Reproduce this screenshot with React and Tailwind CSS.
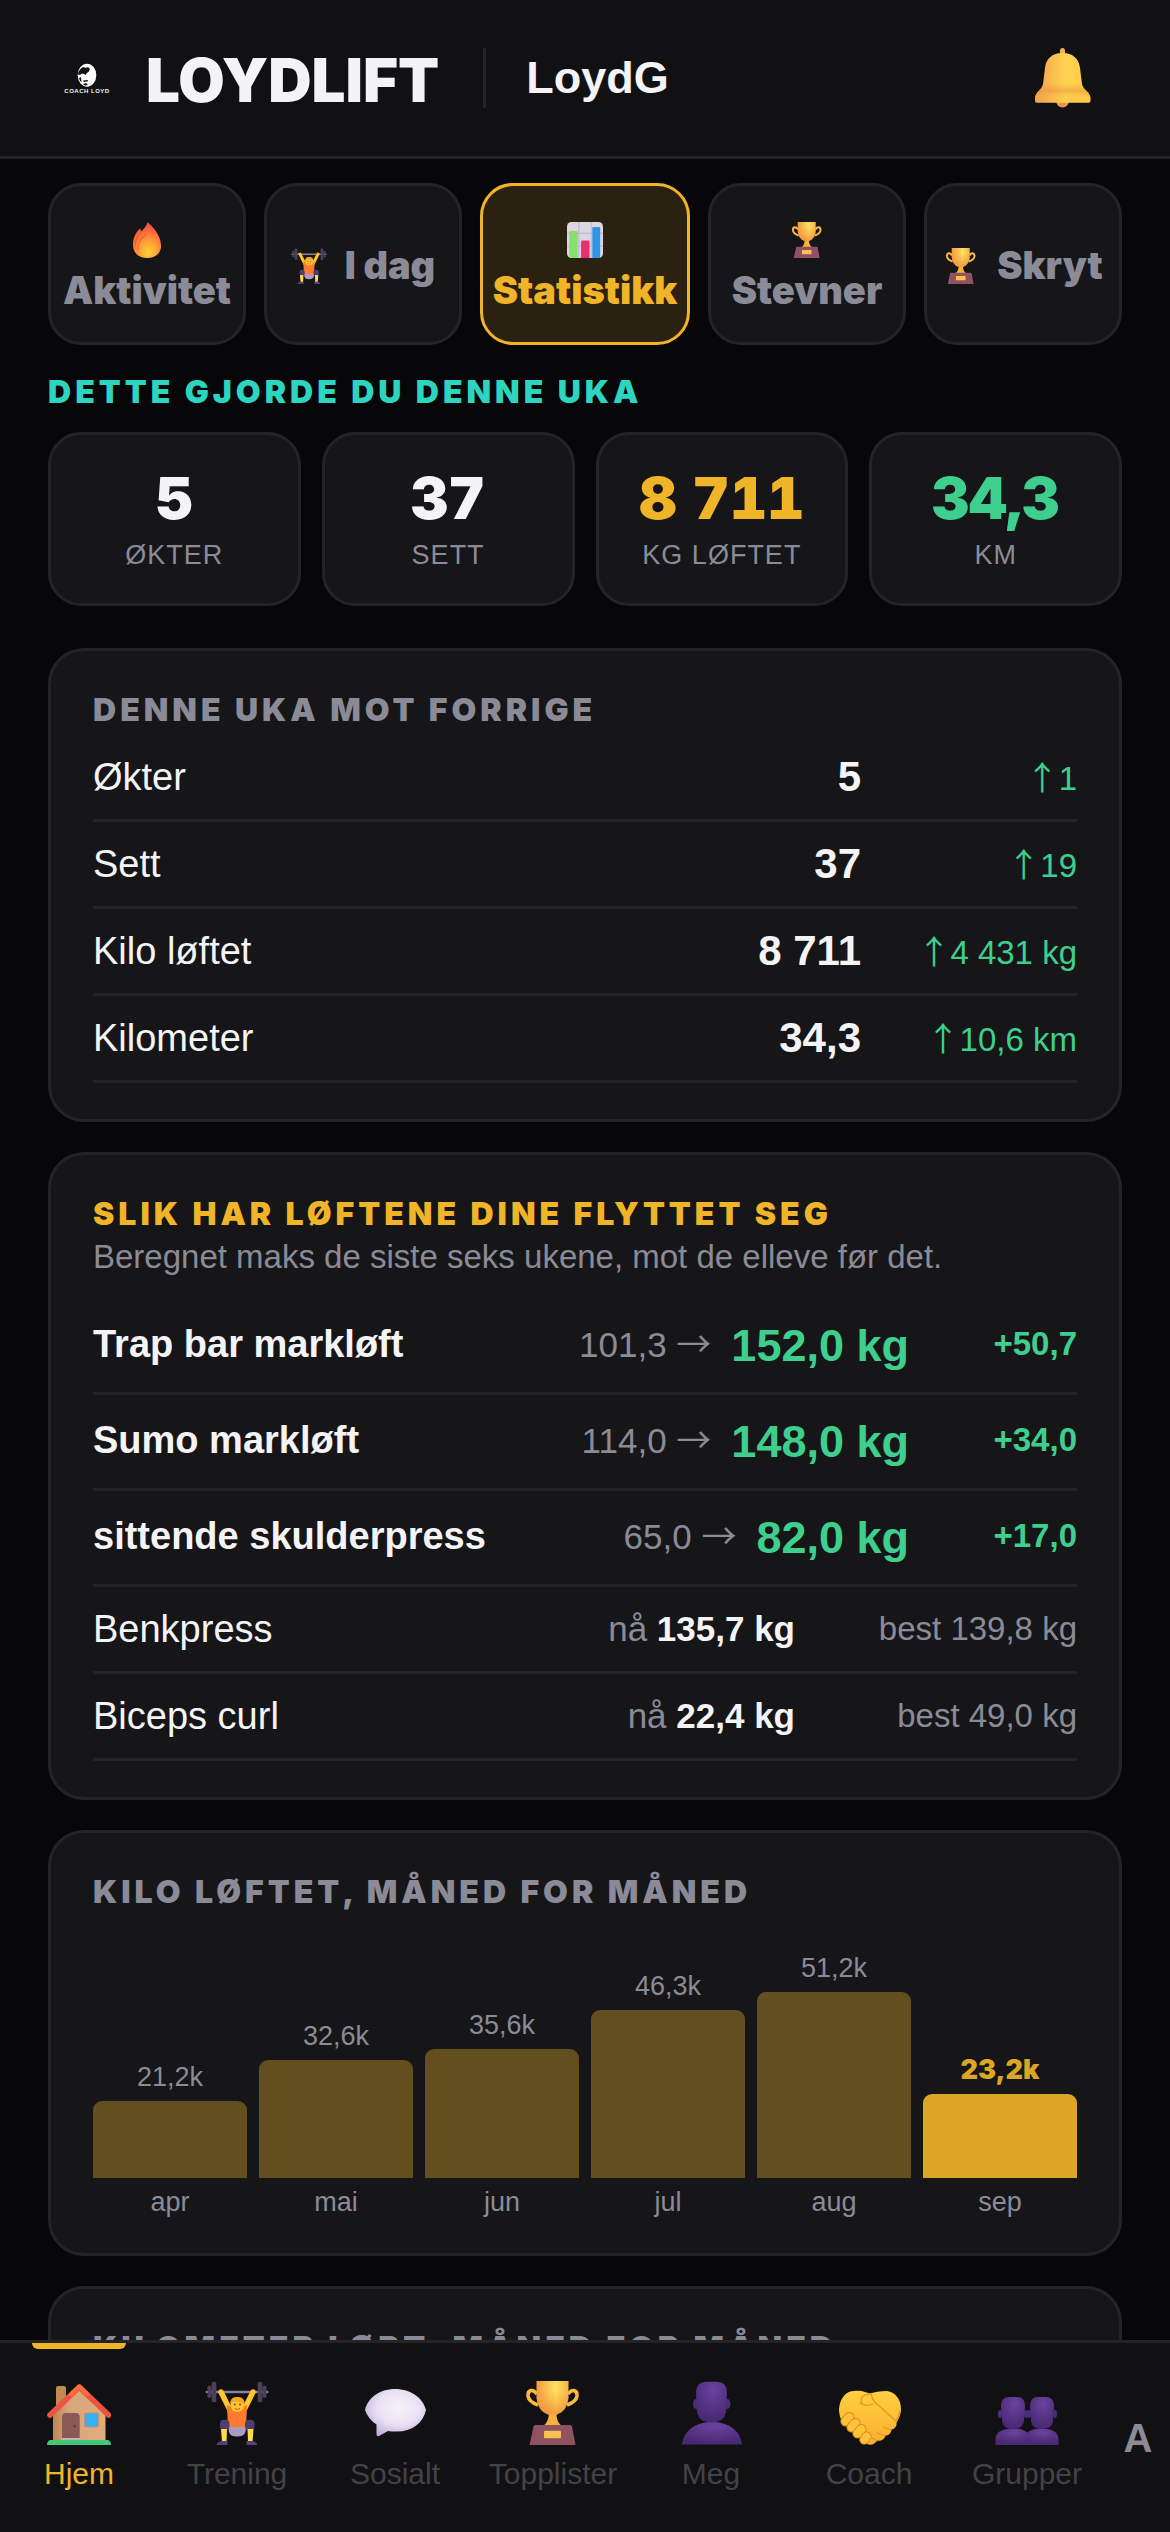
const tabs = [
  { label: 'Aktivitet', icon: FlameIcon },
  { label: 'I dag', icon: LifterIcon },
  { label: 'Statistikk', icon: ChartIcon, active: true },
  { label: 'Stevner', icon: TrophyIcon },
  { label: 'Skryt', icon: TrophyIcon },
];

const weekStats = [
  { value: '5', label: 'ØKTER', color: 'text-[#f4f4f6]' },
  { value: '37', label: 'SETT', color: 'text-[#f4f4f6]' },
  { value: '8 711', label: 'KG LØFTET', color: 'text-[#f0b429]' },
  { value: '34,3', label: 'KM', color: 'text-[#3ecf8e]' },
];

const comparison = [
  { label: 'Økter', value: '5', delta: '1' },
  { label: 'Sett', value: '37', delta: '19' },
  { label: 'Kilo løftet', value: '8 711', delta: '4 431 kg' },
  { label: 'Kilometer', value: '34,3', delta: '10,6 km' },
];

const improved = [
  { name: 'Trap bar markløft', from: '101,3', to: '152,0 kg', delta: '+50,7' },
  { name: 'Sumo markløft', from: '114,0', to: '148,0 kg', delta: '+34,0' },
  { name: 'sittende skulderpress', from: '65,0', to: '82,0 kg', delta: '+17,0' },
];

const steady = [
  { name: 'Benkpress', now: '135,7 kg', best: '139,8 kg' },
  { name: 'Biceps curl', now: '22,4 kg', best: '49,0 kg' },
];

const months = [
  { name: 'apr', value: 21.2 },
  { name: 'mai', value: 32.6 },
  { name: 'jun', value: 35.6 },
  { name: 'jul', value: 46.3 },
  { name: 'aug', value: 51.2 },
  { name: 'sep', value: 23.2, current: true },
];

const navItems = [
  { label: 'Hjem', icon: HouseIcon, active: true },
  { label: 'Trening', icon: LifterIcon },
  { label: 'Sosialt', icon: BubbleIcon },
  { label: 'Topplister', icon: TrophyIcon },
  { label: 'Meg', icon: PersonIcon },
  { label: 'Coach', icon: HandshakeIcon },
  { label: 'Grupper', icon: PeopleIcon },
];

const MAX_BAR_HEIGHT = 186;

function Logo() {
  return (
    <svg viewBox="0 0 54 54" className="w-[54px] h-[54px] shrink-0" role="img" aria-label="Coach Loyd">
      <ellipse cx="27" cy="24.200" rx="9.300" ry="11.500" fill="#fff" />
      <path
        d="M21 17.500C22.500 15.500 25 16 25.500 17C27.500 15.500 30.500 16.500 29.500 19.500C29 21.500 27 21 26.500 22.500L25.500 24L24 23L22 22.500L20 24L18 23.500L18.500 20.500Z"
        fill="#111113"
      />
      <path d="M19 27L21 26L21.500 31L20 30Z M23 29.500L28 29L27.500 30.500L24 31Z M23 33L26 32L28 34L25 34.500Z" fill="#111113" />
      <text x="27" y="42" textAnchor="middle" fontSize="6" fontWeight="700" letterSpacing="0.5" fill="#f4f4f6">
        COACH LOYD
      </text>
    </svg>
  );
}

function BellIcon({ className }) {
  return (
    <svg viewBox="0 0 60 60" className={className} aria-hidden="true">
      <defs>
        <linearGradient id="bell" x1="0" y1="0" x2="1" y2="0">
          <stop offset="0" stopColor="#f4a04c" />
          <stop offset="0.55" stopColor="#ffd352" />
          <stop offset="1" stopColor="#ffca45" />
        </linearGradient>
        <linearGradient id="bellShade" x1="0" y1="0" x2="0" y2="1">
          <stop offset="0.6" stopColor="#f0a040" stopOpacity="0" />
          <stop offset="0.76" stopColor="#e89640" stopOpacity="0.55" />
          <stop offset="0.88" stopColor="#f0a040" stopOpacity="0.1" />
        </linearGradient>
      </defs>
      <circle cx="29.500" cy="53" r="6.500" fill="#f3935a" />
      <rect x="27" y="0" width="5" height="9" rx="2.500" fill="#f6b04a" />
      <path
        d="M29.500 5C40 5 46 11 47 20L49 36C50 42 57.500 44 57.500 50V53Q57.500 54.700 55.500 54.700H4Q2 54.700 2 53V50C2 44 9 42 10 36L12 20C13 11 19 5 29.500 5Z"
        fill="url(#bell)"
      />
      <path
        d="M29.500 5C40 5 46 11 47 20L49 36C50 42 57.500 44 57.500 50V53Q57.500 54.700 55.500 54.700H4Q2 54.700 2 53V50C2 44 9 42 10 36L12 20C13 11 19 5 29.500 5Z"
        fill="url(#bellShade)"
      />
    </svg>
  );
}

function FlameIcon({ className }) {
  return (
    <svg viewBox="0 0 64 64" className={className} aria-hidden="true">
      <defs>
        <radialGradient id="flame" cx="0.55" cy="0.85" r="0.85">
          <stop offset="0" stopColor="#ffd23a" />
          <stop offset="0.35" stopColor="#ffa436" />
          <stop offset="0.7" stopColor="#fb6b3a" />
          <stop offset="1" stopColor="#ee4450" />
        </radialGradient>
      </defs>
      <path
        d="M33 0C42 8 57 24 57 42C57 56 46 64 33 64C17 64 7 55 7 40C7 28 13 17 19 12C21 13 21 15 22 17C26 12 31 8 33 0Z"
        fill="url(#flame)"
      />
      <path d="M22 17C16 24 11 32 11 43M30 22C21 29 15 38 16 50" fill="none" stroke="#e8562f" strokeWidth="2" opacity="0.7" />
    </svg>
  );
}

function LifterIcon({ className }) {
  return (
    <svg viewBox="0 0 64 64" className={className} aria-hidden="true">
      <rect x="0.500" y="9.700" width="63" height="2.600" rx="1.300" fill="#8b8395" />
      <g fill="#4b3f5c">
        <rect x="2.500" y="4.700" width="4" height="12" rx="1.500" />
        <rect x="6.700" y="0.700" width="4.600" height="20.600" rx="1.500" />
        <rect x="52.700" y="0.700" width="4.600" height="20.600" rx="1.500" />
        <rect x="57.500" y="4.700" width="4" height="12" rx="1.500" />
      </g>
      <path d="M16 11L25 29M48 11L39 29" stroke="#ffc42e" strokeWidth="5.400" strokeLinecap="round" />
      <path d="M22 24Q32 29 42 24L41 48H23Z" fill="#ff7a2c" />
      <path d="M23.500 46H41L40.500 51Q39 55.500 32 55.500Q25 55.500 24 51Z" fill="#a99bc4" />
      <rect x="15" y="38.700" width="9.500" height="10.500" rx="4" fill="#4f3c70" />
      <rect x="40" y="38.700" width="9.500" height="10.500" rx="4" fill="#4f3c70" />
      <path d="M16 48H22L21.500 61H17Z M42.500 48H48.500L47.500 61H43Z" fill="#ffdc45" />
      <path d="M11.500 64Q12 61 16.500 60H22.500V64Z M41.500 64V60H47.500Q52 61 52.500 64Z" fill="#54407a" />
      <circle cx="32.300" cy="24" r="7" fill="#ffc62c" />
      <path d="M25 22Q26 15.500 32 16Q39 15 40 23Q36 20.500 32 20.500Q28 20.500 25 22Z" fill="#f6a91c" />
      <circle cx="29.800" cy="23.600" r="1" fill="#54407a" />
      <circle cx="35" cy="23.600" r="1" fill="#54407a" />
      <path d="M30 27.500Q32.400 29.500 35 27.500" fill="none" stroke="#b3541c" strokeWidth="1" />
    </svg>
  );
}

function ChartIcon({ className }) {
  return (
    <svg viewBox="0 0 64 64" className={className} aria-hidden="true">
      <rect width="64" height="64" rx="8" fill="#dcd5e2" />
      <path d="M0 20H64M0 43H64M21 0V64M43 0V64" stroke="#b9b0c2" strokeWidth="1.500" />
      <path d="M4 64V18Q4 16 6 16H17Q19 16 19 18V64Z" fill="#86e06d" />
      <path d="M25 64V35Q25 33 27 33H38Q40 33 40 35V64Z" fill="#e6306f" />
      <path d="M45 64V11Q45 9 47 9H57Q59 9 59 11V64Z" fill="#3194e6" />
    </svg>
  );
}

function TrophyIcon({ className }) {
  return (
    <svg viewBox="0 0 64 64" className={className} aria-hidden="true">
      <defs>
        <linearGradient id="cup" x1="0" y1="0" x2="1" y2="0">
          <stop offset="0" stopColor="#f49a3f" />
          <stop offset="0.6" stopColor="#ffe060" />
          <stop offset="1" stopColor="#f7b443" />
        </linearGradient>
        <linearGradient id="cupShade" x1="0" y1="0" x2="0" y2="1">
          <stop offset="0.3" stopColor="#ee9440" stopOpacity="0" />
          <stop offset="1" stopColor="#ee8a3c" stopOpacity="0.8" />
        </linearGradient>
      </defs>
      <path
        d="M16 13Q13 9 10 9.500Q6.500 10.500 7 15Q8 21 17 24M47 13Q50 9 53 9.500Q56.500 10.500 56 15Q55 21 46 24"
        fill="none"
        stroke="#fcb93e"
        strokeWidth="3.600"
      />
      <path d="M28 31H35.500Q35 41 41 45H22Q28 41 28 31Z" fill="#f6b13f" />
      <path d="M15.500 0H47.500V17Q46 30 36 33.500H27Q17 30 15.500 17Z" fill="url(#cup)" />
      <path d="M15.500 0H47.500V17Q46 30 36 33.500H27Q17 30 15.500 17Z" fill="url(#cupShade)" />
      <path d="M14.500 44H49Q50.500 44 51 45.500L54.500 64H8.500L12.500 45.500Q13 44 14.500 44Z" fill="#8e5263" />
      <rect x="23" y="49.700" width="17" height="7.600" rx="1" fill="#fcc052" />
    </svg>
  );
}

function HouseIcon({ className }) {
  return (
    <svg viewBox="0 0 64 64" className={className} aria-hidden="true">
      <defs>
        <linearGradient id="wall" x1="0" y1="0" x2="1" y2="0">
          <stop offset="0" stopColor="#bd8553" />
          <stop offset="0.3" stopColor="#d9a57d" />
          <stop offset="1" stopColor="#e0ad7e" />
        </linearGradient>
      </defs>
      <path d="M9 7Q9 5 11 5H17Q19 5 19 7V30H9Z" fill="#c28a52" />
      <path d="M32.300 8L58.500 34V60H6V34Z" fill="url(#wall)" />
      <path d="M3 34L32.300 6L61.500 34" fill="none" stroke="#ee5340" strokeWidth="5.600" strokeLinecap="round" strokeLinejoin="round" />
      <path d="M24 13.500L32.300 5.500L40 13" fill="none" stroke="#f96f35" strokeWidth="4" strokeLinecap="round" strokeLinejoin="round" />
      <path d="M15 58V36Q15 32 19 32H29Q32.700 32 32.700 36V58Z" fill="#8a5a55" />
      <circle cx="27.700" cy="45" r="1.500" fill="#6d3f3f" />
      <rect x="14" y="57" width="20" height="2.500" fill="#bdb3c0" />
      <rect x="37" y="31.500" width="15" height="15" rx="2" fill="#cf915c" />
      <rect x="38" y="32.500" width="13" height="13" rx="1" fill="#35b2f6" />
      <path d="M3 59H61Q64 60 64 64H0Q0 60 3 59Z" fill="#41c877" />
    </svg>
  );
}

function BubbleIcon({ className }) {
  return (
    <svg viewBox="0 0 64 64" className={className} aria-hidden="true">
      <defs>
        <radialGradient id="bubble" cx="0.55" cy="0.4" r="0.65">
          <stop offset="0" stopColor="#f6f3f9" />
          <stop offset="0.55" stopColor="#e9e1f3" />
          <stop offset="1" stopColor="#bda9dc" />
        </radialGradient>
      </defs>
      <path
        d="M32 8C48 8 60 17 63 29C60 43 48 51 33 50.500Q28 50.500 25 50L16 55Q13.500 56 13.500 53V43.500Q5 38 2 29C5 17 16 8 32 8Z"
        fill="url(#bubble)"
      />
    </svg>
  );
}

function PersonIcon({ className }) {
  return (
    <svg viewBox="0 0 64 64" className={className} aria-hidden="true">
      <defs>
        <radialGradient id="person" cx="0.55" cy="0.2" r="0.8">
          <stop offset="0" stopColor="#6b439e" />
          <stop offset="0.5" stopColor="#573587" />
          <stop offset="1" stopColor="#472872" />
        </radialGradient>
      </defs>
      <ellipse cx="17" cy="23" rx="3" ry="5" fill="#4c2d79" />
      <ellipse cx="48.500" cy="23" rx="3" ry="5" fill="#4c2d79" />
      <path d="M3 63.500C5 49 17 41 33 41C49 41 61 49 63 63.500Z" fill="url(#person)" />
      <path d="M17 12Q17 0.700 28 0.700H37Q48 0.700 48 12L47 31Q45 41.500 33 41.500Q20 41.500 18 31Z" fill="url(#person)" />
    </svg>
  );
}

function PeopleIcon({ className }) {
  return (
    <svg viewBox="0 0 64 64" className={className} aria-hidden="true">
      <defs>
        <radialGradient id="people" cx="0.55" cy="0.2" r="0.8">
          <stop offset="0" stopColor="#6b439e" />
          <stop offset="0.5" stopColor="#573587" />
          <stop offset="1" stopColor="#472872" />
        </radialGradient>
      </defs>
      <ellipse cx="34" cy="33" rx="2" ry="4" fill="#4c2d79" />
      <ellipse cx="60" cy="33" rx="2" ry="4" fill="#4c2d79" />
      <path d="M29 64V58Q31 47.500 46 47.500Q63 47.500 63.500 58V64Z" fill="url(#people)" />
      <path d="M35 25Q35 16 43 16H51Q59 16 59 25L58 40Q57 48 47 48Q37 48 36 40Z" fill="url(#people)" />
      <ellipse cx="5" cy="33" rx="2" ry="4" fill="#4c2d79" />
      <ellipse cx="31" cy="33" rx="2" ry="4" fill="#4c2d79" />
      <path d="M0.500 64V58Q1 47.500 18 47.500Q34 47.500 34.500 58V64Z" fill="url(#people)" />
      <path d="M6 25Q6 16 14 16H22Q30 16 30 25L29 40Q28 48 18 48Q8 48 7 40Z" fill="url(#people)" />
    </svg>
  );
}

function HandshakeIcon({ className }) {
  return (
    <svg viewBox="0 0 64 64" className={className} aria-hidden="true">
      <defs>
        <linearGradient id="hand" x1="0" y1="0" x2="0" y2="1">
          <stop offset="0" stopColor="#ffd040" />
          <stop offset="1" stopColor="#f9ae2f" />
        </linearGradient>
      </defs>
      <path
        d="M17 10C25 9 30 12 33 12.500C38 11 43 10 50 10C58 11 64 18 64 28C64 34 61 39 59.500 42C60 46 57 48.500 54.500 48.500C54 53 51 54.500 48.500 54.500C47.500 59 43 60.500 40 59.500C38 63 34 65 30 63L5 40C3 37 2 32 2 28C3 17 9 10 17 10Z"
        fill="url(#hand)"
      />
      <path d="M25 22Q22 17 28 14L34 12.500Q36 21 41 24L59 40Q62 36 63 30" fill="none" stroke="#e39a22" strokeWidth="1.300" strokeLinecap="round" />
      <path d="M36 23Q28 26 23 22" fill="none" stroke="#e39a22" strokeWidth="1.300" strokeLinecap="round" />
      <path d="M46 46L54 49M40 52L48 55M35 57L40 60" stroke="#e39a22" strokeWidth="1.200" strokeLinecap="round" />
      <g stroke="#dd8a26" strokeWidth="1" fill="#ffc238">
        <rect x="3" y="33.500" width="15" height="9.500" rx="4.700" transform="rotate(-48 10.500 38.300)" />
        <rect x="9" y="39.500" width="15" height="9.500" rx="4.700" transform="rotate(-48 16.500 44.300)" />
        <rect x="15" y="45.500" width="15" height="9.500" rx="4.700" transform="rotate(-48 22.500 50.300)" />
        <rect x="22" y="52.500" width="13" height="9" rx="4.500" transform="rotate(-54 28.500 57)" />
      </g>
    </svg>
  );
}

function Arrow({ children }) {
  return <span className="font-['Noto_Sans_CJK_JP',sans-serif]">{children}</span>;
}

function Card({ title, titleColor = 'text-[#8b8b98]', children }) {
  return (
    <section className="bg-[#161618] border-3 border-[#242427] rounded-[36px] px-[42px] py-9">
      <h2 className={`font-['Inter',sans-serif] font-black text-[32px] leading-[45px] tracking-[4px] uppercase ${titleColor}`}>{title}</h2>
      {children}
    </section>
  );
}

function Cell({ as: Tag = 'td', className, children }) {
  return <Tag className={`p-0 border-b-3 border-[#242427] ${className}`}>{children}</Tag>;
}

export default function App() {
  const maxValue = Math.max(...months.map((month) => month.value));

  return (
    <div className="h-screen flex flex-col overflow-hidden bg-[#070709] text-[#f4f4f6] font-['Liberation_Sans',Arial,sans-serif]">
      <header className="shrink-0 flex items-center h-[159px] pl-[60px] pr-[77px] bg-[#111113] border-b-3 border-[#242427]">
        <Logo />
        <h1 className="ml-8 pt-[3px] font-['Inter',sans-serif] font-black text-[60px] leading-[60px]">LOYDLIFT</h1>
        <span className="ml-11 w-[3px] h-[60px] bg-[#242427]" />
        <span className="ml-10 font-bold text-[45px] leading-[60px]">LoydG</span>
        <button type="button" aria-label="Varsler" className="ml-auto">
          <BellIcon className="w-[60px] h-[60px]" />
        </button>
      </header>

      <main className="flex-1 min-h-0 overflow-y-auto [scrollbar-width:none] px-12 pt-6">
        <div className="flex gap-[18px]">
          {tabs.map(({ label, icon: Icon, active }) => (
            <button
              key={label}
              type="button"
              aria-pressed={Boolean(active)}
              className={`h-[162px] pt-[3px] flex flex-wrap content-center items-center justify-center gap-x-[18px] border-3 rounded-[33px] font-['Inter',sans-serif] font-black text-[38px] leading-[51px] ${
                active
                  ? 'w-[210px] shrink-0 bg-[#2a2110] border-[#f0b429] text-[#f0b429]'
                  : 'flex-1 min-w-0 bg-[#161618] border-[#242427] text-[#8b8b98]'
              }`}
            >
              <Icon className="w-9 h-9 my-[7px]" />
              {label}
            </button>
          ))}
        </div>

        <h2 className="mt-6 font-['Inter',sans-serif] font-black text-[32px] leading-[45px] tracking-[4px] text-[#2dd4bf]">
          DETTE GJORDE DU DENNE UKA
        </h2>
        <div className="mt-[18px] grid grid-cols-4 gap-[21px]">
          {weekStats.map((stat) => (
            <div
              key={stat.label}
              className="h-[174px] pt-[3px] flex flex-col items-center justify-center bg-[#161618] border-3 border-[#242427] rounded-[33px]"
            >
              <span className={`font-['Inter',sans-serif] font-black tabular-nums text-[58px] leading-[63px] ${stat.color}`}>{stat.value}</span>
              <span className="mt-[6px] text-[27px] leading-[39px] tracking-[1px] text-[#8b8b98]">{stat.label}</span>
            </div>
          ))}
        </div>

        <div className="mt-[42px] flex flex-col gap-[30px]">
          <Card title="Denne uka mot forrige">
            <table className="mt-[3px] w-full border-separate border-spacing-0">
              <tbody>
                {comparison.map((row) => (
                  <tr key={row.label}>
                    <Cell as="th" className="h-[87px] text-left font-normal text-[38px] leading-[48px]">{row.label}</Cell>
                    <Cell className="text-right font-bold text-[42px] leading-[48px]">{row.value}</Cell>
                    <Cell className="w-[216px] text-right text-[33px] leading-[48px] text-[#3ecf8e]">
                      <Arrow>↑</Arrow>{row.delta}
                    </Cell>
                  </tr>
                ))}
              </tbody>
            </table>
          </Card>

          <Card title="Slik har løftene dine flyttet seg" titleColor="text-[#f0b429]">
            <p className="text-[33px] leading-[42px] text-[#8b8b98]">Beregnet maks de siste seks ukene, mot de elleve før det.</p>
            <table className="mt-[21px] w-full border-separate border-spacing-0">
              <tbody>
                {improved.map((lift) => (
                  <tr key={lift.name}>
                    <Cell as="th" className="h-[96px] pb-1 text-left font-bold text-[38px] leading-[48px]">{lift.name}</Cell>
                    <Cell>
                      <div className="flex items-center justify-end gap-5">
                        <span className="pb-1 text-[35px] leading-[48px] text-[#8b8b98]">{lift.from} <Arrow>→</Arrow></span>
                        <strong className="text-[45px] leading-[54px] text-[#3ecf8e]">{lift.to}</strong>
                      </div>
                    </Cell>
                    <Cell className="w-[168px] pb-1 text-right font-bold text-[33px] leading-[48px] text-[#3ecf8e]">{lift.delta}</Cell>
                  </tr>
                ))}
              </tbody>
            </table>
            <table className="w-full border-separate border-spacing-0">
              <tbody>
                {steady.map((lift) => (
                  <tr key={lift.name}>
                    <Cell as="th" className="h-[87px] text-left font-normal text-[38px] leading-[48px]">{lift.name}</Cell>
                    <Cell className="text-right text-[35px] leading-[48px] text-[#8b8b98]">
                      nå <strong className="text-[#f4f4f6]">{lift.now}</strong>
                    </Cell>
                    <Cell className="w-[282px] text-right text-[33px] leading-[48px] text-[#8b8b98]">best {lift.best}</Cell>
                  </tr>
                ))}
              </tbody>
            </table>
          </Card>

          <Card title="Kilo løftet, måned for måned">
            <div className="h-[303px] flex items-end gap-3 text-center text-[27px] leading-[30px] text-[#8b8b98]">
              {months.map((month) => (
                <div key={month.name} className="flex-1">
                  <div className={month.current ? "font-['Inter',sans-serif] font-black text-[#dba526]" : ''}>
                    {month.value.toFixed(1).replace('.', ',')}k
                  </div>
                  <div
                    className={`my-[9px] rounded-t-[9px] ${month.current ? 'bg-[#dba526]' : 'bg-[#624e1e]'}`}
                    style={{ height: Math.round((month.value / maxValue) * MAX_BAR_HEIGHT) }}
                  />
                  <div>{month.name}</div>
                </div>
              ))}
            </div>
          </Card>

          <Card title="Kilometer løpt, måned for måned" />
        </div>
      </main>

      <nav className="shrink-0 h-[192px] flex items-stretch bg-[#111113] border-t-3 border-[#242427]">
        {navItems.map(({ label, icon: Icon, active }) => (
          <a
            key={label}
            href="#"
            aria-current={active ? 'page' : undefined}
            className={`relative flex-1 min-w-0 flex flex-col items-center pt-[38px] text-[30px] leading-9 ${
              active ? 'text-[#f0b429]' : 'text-[#424247]'
            }`}
          >
            {active && <span className="absolute top-0 left-1/5 w-3/5 h-[6px] bg-[#f0b429] rounded-b-[6px]" />}
            <Icon className="w-16 h-16" />
            <span className="mt-[11px]">{label}</span>
          </a>
        ))}
        <button type="button" className="w-16 shrink-0 font-bold text-[40px] text-[#8b8b98]">A</button>
      </nav>
    </div>
  );
}
